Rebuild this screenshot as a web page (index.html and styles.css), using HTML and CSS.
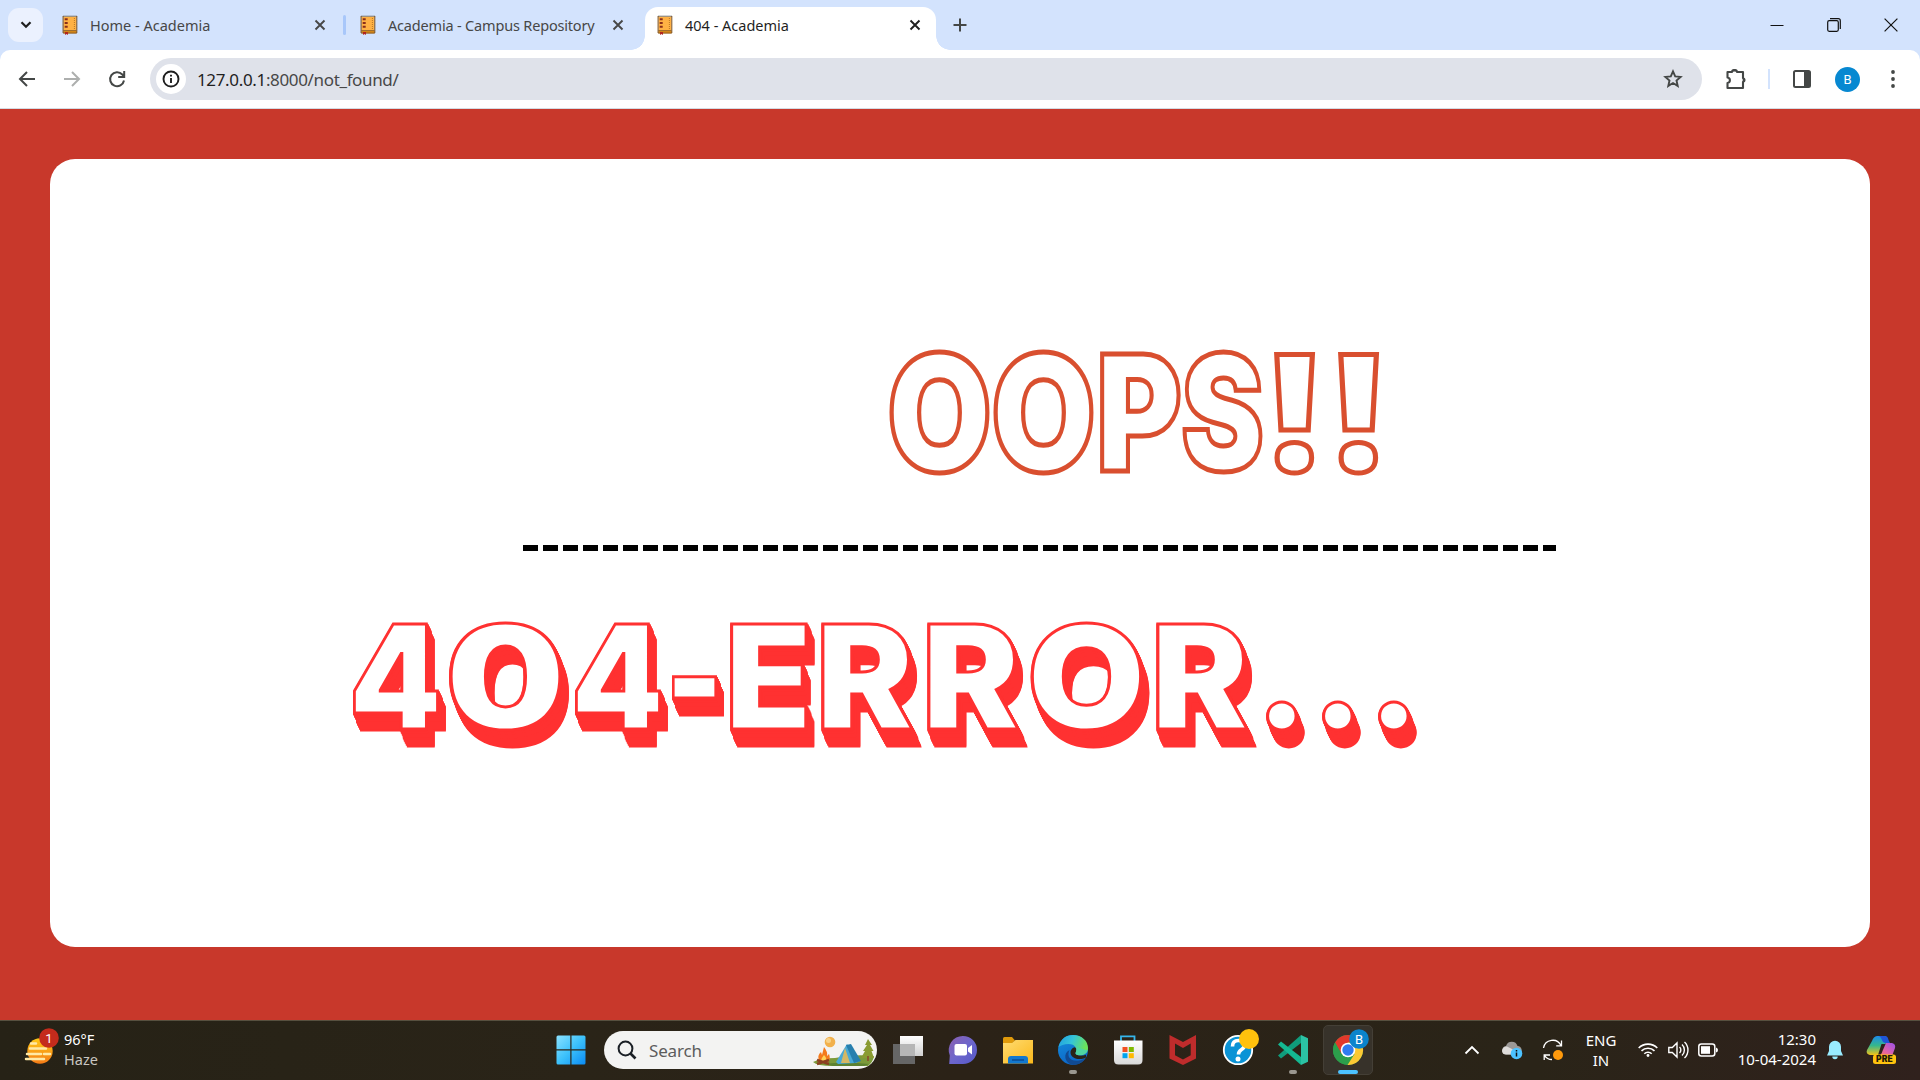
FILE: index.html
```html
<!DOCTYPE html>
<html lang="en">
<head>
<meta charset="utf-8">
<title>404 - Academia</title>
<link rel="stylesheet" href="styles.css">
</head>
<body>
<svg class="defs" width="0" height="0" aria-hidden="true">
  <defs>
    <symbol id="book" viewBox="0 0 16 20">
      <path d="M1.6 1.4h12.6v14.4H1.6z" fill="#ffb144"/>
      <path d="M1.500 16h13v2.300h-13z" fill="#f9a01b"/>
      <path d="M1 .7h14v1H1z" fill="#777"/>
      <path d="M1.1 1v17h13.700V1M1.400 15.800h13" fill="none" stroke="#7a4a16"/>
      <path d="M12.400 3v12" stroke="#a86a1d" stroke-width=".8" stroke-dasharray="1 1"/>
      <path d="M2.700 3.200h3v2h-3zM2.700 7h3v2h-3zM2.700 10.800h3v2h-3z" fill="#8a2e1a"/>
      <path d="M3 17h3v3l-1.500-1L3 20z" fill="#b3261e"/>
    </symbol>
    <symbol id="close" viewBox="0 0 12 12"><path d="M1.500 1.500l9 9M10.500 1.500l-9 9" fill="none" stroke="currentColor" stroke-width="1.900"/></symbol>
    <linearGradient id="gWin" x1="0" y1="0" x2="1" y2="1"><stop offset="0" stop-color="#8be2ff"/><stop offset=".5" stop-color="#3cc1fb"/><stop offset="1" stop-color="#0a8bf5"/></linearGradient>
    <linearGradient id="gSun" x1="0" y1="0" x2="0" y2="1"><stop offset="0" stop-color="#ffc917"/><stop offset="1" stop-color="#f47b16"/></linearGradient>
    <linearGradient id="gChat" x1="0" y1="0" x2="1" y2="1"><stop offset="0" stop-color="#8c5fae"/><stop offset=".5" stop-color="#6d66cc"/><stop offset="1" stop-color="#5558c9"/></linearGradient>
    <linearGradient id="gFold" x1="0" y1="0" x2="1" y2="1"><stop offset="0" stop-color="#ffdc72"/><stop offset="1" stop-color="#fbb81b"/></linearGradient>
    <linearGradient id="gEdge" x1="0" y1="0" x2="1" y2=".3"><stop offset="0" stop-color="#1f9ee0"/><stop offset=".5" stop-color="#35c4d8"/><stop offset="1" stop-color="#6be35a"/></linearGradient>
    <linearGradient id="gEdgeB" x1="0" y1="0" x2=".4" y2="1"><stop offset="0" stop-color="#1590dd"/><stop offset="1" stop-color="#0c66c7"/></linearGradient>
    <linearGradient id="gStore" x1="0" y1="0" x2="0" y2="1"><stop offset="0" stop-color="#fff"/><stop offset="1" stop-color="#d9d9d9"/></linearGradient>
    <linearGradient id="gView" x1="0" y1="0" x2="0" y2="1"><stop offset="0" stop-color="#fff"/><stop offset="1" stop-color="#d0d0d0"/></linearGradient>
    <linearGradient id="gCoA" x1="0" y1="0" x2="0" y2="1"><stop offset="0" stop-color="#1d8bea"/><stop offset=".5" stop-color="#35b78c"/><stop offset="1" stop-color="#f2c21a"/></linearGradient>
    <linearGradient id="gCoB" x1="1" y1="0" x2="0" y2="1"><stop offset="0" stop-color="#9b50e8"/><stop offset=".6" stop-color="#e264a8"/><stop offset="1" stop-color="#ff7a5a"/></linearGradient>
  </defs>
</svg>

<header class="tabstrip">
  <button class="tab-search"><svg width="12" height="8" viewBox="0 0 12 8"><path d="M1.500 1.200L6 5.800l4.500-4.600" fill="none" stroke="#1f1f1f" stroke-width="2.200"/></svg></button>
  <div class="tab tab-first"><svg class="fav"><use href="#book"/></svg><span class="t-home">Home - Academia</span><svg class="x"><use href="#close"/></svg></div>
  <i class="sep"></i>
  <div class="tab tab-second"><svg class="fav"><use href="#book"/></svg><span class="t-repo">Academia - Campus Repository</span><svg class="x"><use href="#close"/></svg></div>
  <div class="tab tab-active"><svg class="fav"><use href="#book"/></svg><span class="t-404">404 - Academia</span><svg class="x"><use href="#close"/></svg></div>
  <svg class="plus" width="14" height="14" viewBox="0 0 14 14"><path d="M7 .5v13M.5 7h13" stroke="#444746" stroke-width="2"/></svg>
  <div class="win">
    <svg width="14" height="14" viewBox="0 0 14 14"><path d="M.5 7.500h13" stroke="#111"/></svg>
    <svg width="14" height="14" viewBox="0 0 14 14" fill="none" stroke="#111" stroke-width="1.200"><rect x=".7" y="2.700" width="10.600" height="10.600" rx="1.500"/><path d="M3 .7h8.300a2 2 0 0 1 2 2V11"/></svg>
    <svg width="14" height="14" viewBox="0 0 14 14"><path d="M.6.600l12.800 12.800M13.400.6L.6 13.400" stroke="#111" stroke-width="1.200"/></svg>
  </div>
</header>

<nav class="toolbar-back"><div class="toolbar">
  <svg class="nav-i" width="18" height="18" viewBox="0 0 18 18" fill="none" stroke="#444746" stroke-width="2"><path d="M17 9H2.500M9 2L2 9l7 7"/></svg>
  <svg class="nav-i" width="18" height="18" viewBox="0 0 18 18" fill="none" stroke="#adafae" stroke-width="2"><path d="M1 9h14.500M9 2l7 7-7 7"/></svg>
  <svg class="nav-i" width="18" height="18" viewBox="0 0 18 18" fill="none" stroke="#444746" stroke-width="2"><path d="M16 10.500A7 7 0 1 1 14.300 4.500L16 6.300M16.200 1v6h-6"/></svg>
  <div class="omnibox">
    <span class="info"><svg width="18" height="18" viewBox="0 0 18 18"><circle cx="9" cy="9" r="7.500" fill="none" stroke="#1f1f1f" stroke-width="1.900"/><path d="M9 8v5M9 4.700v1.900" stroke="#1f1f1f" stroke-width="1.900"/></svg></span>
    <span class="url">127.0.0.1<span>:8000/not_found/</span></span>
    <svg class="star" width="20" height="20" viewBox="0 0 20 20"><path d="M10 2.400l2.200 5 5.400.5-4.100 3.600 1.200 5.400L10 14l-4.700 2.900 1.200-5.400-4.100-3.600 5.400-.5z" fill="none" stroke="#444746" stroke-width="1.900"/></svg>
  </div>
  <svg class="ext" width="22" height="22" viewBox="0 0 22 22"><path d="M3.500 4H7a2.500 2 0 0 1 5 0h6v6a2 2.500 0 0 1 0 4v6H2.500v-5c3.200-.5 3.200-5 0-5.500V4z" fill="none" stroke="#444746" stroke-width="2.100" stroke-linejoin="round"/><path d="M7 3.500a2.500 2.500 0 0 1 5 0zM18 9.500a2.500 2.500 0 0 1 0 5z" fill="#444746"/></svg>
  <i class="bar"></i>
  <svg class="side" width="18" height="18" viewBox="0 0 18 18"><rect x="1" y="1" width="16" height="16" rx="1.500" fill="none" stroke="#444746" stroke-width="2"/><path d="M11 1h6v16h-6z" fill="#444746"/></svg>
  <span class="avatar">B</span>
  <svg class="dots" width="4" height="18" viewBox="0 0 4 18" fill="#444746"><circle cx="2" cy="2" r="1.900"/><circle cx="2" cy="9" r="1.900"/><circle cx="2" cy="16" r="1.900"/></svg>
</div></nav>

<main class="page">
  <section class="card">
    <svg class="oops" width="520" height="150" viewBox="870 336 520 150" role="heading">
      <text y="470.500"><tspan x="887" textLength="105" lengthAdjust="spacingAndGlyphs">O</tspan><tspan x="991" textLength="105" lengthAdjust="spacingAndGlyphs">O</tspan><tspan x="1096" textLength="86" lengthAdjust="spacingAndGlyphs">P</tspan><tspan x="1181" textLength="83" lengthAdjust="spacingAndGlyphs">S</tspan><tspan class="bang" x="1270" textLength="49" lengthAdjust="spacingAndGlyphs">!</tspan><tspan class="bang" x="1334" textLength="49" lengthAdjust="spacingAndGlyphs">!</tspan></text>
    </svg>
    <div class="dashes"></div>
    <svg class="error" width="1100" height="150" viewBox="340 608 1100 150" role="heading">
      <text y="729"><tspan x="349" textLength="93" lengthAdjust="spacingAndGlyphs">4</tspan><tspan x="445" textLength="121" lengthAdjust="spacingAndGlyphs">0</tspan><tspan x="571" textLength="93" lengthAdjust="spacingAndGlyphs">4</tspan><tspan x="665" textLength="59" lengthAdjust="spacingAndGlyphs">-</tspan><tspan x="725" textLength="87" lengthAdjust="spacingAndGlyphs">E</tspan><tspan x="816" textLength="98" lengthAdjust="spacingAndGlyphs">R</tspan><tspan x="922" textLength="98" lengthAdjust="spacingAndGlyphs">R</tspan><tspan x="1027" textLength="119" lengthAdjust="spacingAndGlyphs">O</tspan><tspan x="1151" textLength="98" lengthAdjust="spacingAndGlyphs">R</tspan><tspan class="stops" x="1261 1317 1373">...</tspan></text>
    </svg>
  </section>
</main>

<footer class="taskbar">
  <div class="weather">
    <svg width="36" height="36" viewBox="0 0 36 36"><circle cx="16" cy="21" r="12.700" fill="url(#gSun)"/><path d="M7 13.500h5M6 18.500h16M3 24h14M20 24h6M2 29h18" stroke="#ffe9a6" stroke-width="2.500" stroke-linecap="round"/><circle cx="25" cy="8" r="9.800" fill="#c42b1c"/><text x="25" y="12.600" class="badge-n">1</text></svg>
    <p><span>96°F</span><small>Haze</small></p>
  </div>
  <svg class="start" width="30" height="30" viewBox="0 0 30 30" fill="url(#gWin)"><path d="M.5 2a1.500 1.500 0 0 1 1.500-1.500h12.300v13.700H.5zM15.500.5H28A1.500 1.500 0 0 1 29.500 2v12.200h-14zM.5 15.500h13.800v14H2A1.500 1.500 0 0 1 .5 28zM15.500 15.500h14V28a1.500 1.500 0 0 1-1.500 1.500H15.500z"/></svg>
  <div class="search">
    <svg width="20" height="20" viewBox="0 0 20 20"><circle cx="8.500" cy="8.500" r="6.900" fill="none" stroke="#1b2026" stroke-width="2"/><path d="M13.500 13.500l5 5" stroke="#1b2026" stroke-width="2.600"/></svg>
    <span>Search</span>
    <svg class="camp" width="62" height="34" viewBox="0 0 62 34">
      <path d="M0 28q8-4 22-4 18-4 39-2-1 6-6 10H20Q4 32 0 28z" fill="#7c9a3a"/><path d="M10 30q22-3 46 0l-5 2H20z" fill="#5c8130"/>
      <circle cx="17" cy="8" r="5.300" fill="#f2b14c"/><circle cx="15.500" cy="6.500" r="2.500" fill="#f8d289"/>
      <path d="M55 5l4 6h-2l3.500 6h-2l2.500 7H48l4-7h-2l4-6h-2z" fill="#8a9b32"/><path d="M54 22h2v5h-2z" fill="#8a5a2c"/>
      <path d="M23 28l11-18 13 17-4 2-18 1z" fill="#4aa9d6"/><path d="M33 11l5-1 10 17-7 2z" fill="#277fae"/><path d="M28 29l4-15 5 15z" fill="#d5b865"/>
      <path d="M6 27q-2-6 2-9l1 3 2-8q4 5 3 9l2-2q2 5-1 8z" fill="#f47a1c"/><path d="M8 27q1-4 3-6 3 3 2 6z" fill="#ffd257"/><path d="M4 26l12 4M16 26L4 30" stroke="#8b3f20" stroke-width="2.500"/>
    </svg>
  </div>
  <div class="apps">
    <span><svg viewBox="0 0 32 32"><path d="M1 10h22v20H1z" fill="#666"/><path d="M8 2h23v20H8z" fill="url(#gView)"/><path d="M8 10h15v12H8z" fill="#b6b6b6"/></svg></span>
    <span><svg viewBox="0 0 32 32"><path d="M16 2a14 14 0 1 1 0 28H2.200l.6-8.500A14 14 0 0 1 16 2z" fill="url(#gChat)"/><rect x="7.500" y="10" width="12.500" height="11.500" rx="2" fill="#fff"/><path d="M21 14l4-3v9.500l-4-3z" fill="#fff"/></svg></span>
    <span><svg viewBox="0 0 32 32"><path d="M1 4.500Q1 3 2.500 3H10l3 3.500-3 3H1z" fill="#e09a0b"/><path d="M1 9h9l3.500-3H31v23.500H1z" fill="url(#gFold)"/><path d="M6 29.500V25q0-3 3-3h14q3 0 3 3v4.500z" fill="#1278cf"/><path d="M10 26h12" stroke="#0b4b93" stroke-width="1.500"/></svg></span>
    <span><svg viewBox="0 0 32 32"><circle cx="16" cy="16" r="15" fill="url(#gEdgeB)"/><path d="M1.500 13C4 4.500 9 1 16 1c9 0 15 6 15 13 0 4-3 7-8 7-4 0-5-1.500-4.200-3 1.600-3-.3-8-7.300-8-4.500 0-8 1.500-10 3z" fill="url(#gEdge)"/><path d="M12.500 16c-4 9 4 14 16 8.500C25 29 20.500 31 16 31 7 29 6 19 12.500 16z" fill="#114a92"/><path d="M17.500 13.200c3 1.500 2 4 1 5.500-1 2 4 4 10.500 2v2.800c-6 3-14.500 1.500-15.500-4.500-.3-2.800 1.500-5 4-5.800z" fill="#2a2318"/><path d="M30.700 16.500c-.8 2.700-4 4.800-7.700 4.800-4 0-5-1.500-4.200-3l1-5z" fill="#4fd5a2"/></svg><b></b></span>
    <span><svg viewBox="0 0 32 32"><path d="M9 8V2.300h13.500V8" fill="none" stroke="#35b6ec" stroke-width="1.800"/><path d="M2 6.500h28.500V26q0 4.500-4.500 4.500H6.500Q2 30.500 2 26z" fill="url(#gStore)"/><path d="M10.500 13h5v5h-5z" fill="#f25022"/><path d="M16.800 13h5v5h-5z" fill="#7fba00"/><path d="M10.500 19.200h5v5h-5z" fill="#00a4ef"/><path d="M16.800 19.200h5v5h-5z" fill="#ffb900"/></svg></span>
    <span><svg viewBox="0 0 32 32"><path d="M2.500 1L16 8l13-7v23.500L16 31 2.500 24.500zM8 9.500v11.700l8 4.300 7.700-4.300V9.500L16 14z" fill="#bf2c2c" fill-rule="evenodd"/></svg></span>
    <span><svg viewBox="0 0 32 32" class="over"><circle cx="16" cy="16" r="14.200" fill="#0a93d6" stroke="#fff" stroke-width="1.800"/><path d="M10.500 12.500q0-6 6-6 5.800 0 5.800 4.800 0 2.800-3 4.500-2.800 1.700-2.800 4.700" fill="none" stroke="#fff" stroke-width="3.600"/><circle cx="16" cy="25" r="2.500" fill="#fff"/><circle cx="27" cy="5" r="10" fill="#ffc10d"/></svg></span>
    <span><svg viewBox="0 0 32 32"><path d="M1 21.500l3 3L24 9V1z" fill="#109c7c"/><path d="M1 10.500l3-3L24 23v8z" fill="#14b892"/><path d="M24 1l7 3.200v23.600L24 31z" fill="#2bc2a4"/></svg><b></b></span>
    <span class="active"><svg viewBox="0 0 32 32" class="over"><circle cx="16" cy="16" r="15" fill="#2c9e4b"/><path d="M16 16L3 8.500A15 15 0 0 1 29 8.500H16z" fill="#e2382b"/><path d="M3 8.500L9.500 20 16 16V8.500z" fill="#e2382b"/><path d="M3 8.500A15 15 0 0 0 15.500 31L22 20H9.500z" fill="#2c9e4b"/><path d="M16 16l6.500 4L15.500 31A15 15 0 0 0 29 8.500H16z" fill="#fcc934"/><circle cx="16" cy="16" r="7.300" fill="#fff"/><circle cx="16" cy="16" r="5.700" fill="#2f7bf0"/><circle cx="27" cy="5" r="9.800" fill="#0a84cc"/><text x="27" y="9.500" class="badge-b">B</text></svg><b></b></span>
  </div>
  <div class="tray">
    <svg class="chev" width="16" height="10" viewBox="0 0 16 10"><path d="M1.500 8.500L8 2l6.500 6.500" fill="none" stroke="#fff" stroke-width="1.800"/></svg>
    <svg class="cloud" width="22" height="20" viewBox="0 0 22 20"><path d="M5 14.500a4.300 4.300 0 0 1 0-8.500 6 6 0 0 1 11.500 0 4 4 0 0 1 0 8.500z" fill="#9b9896"/><path d="M1 11a4.500 4.500 0 0 1 5-4.500l8 4-2 4H5a4 4 0 0 1-4-3.500z" fill="#dedcda"/><circle cx="15.500" cy="13.500" r="5.800" fill="#4cc2ff"/><path d="M15.500 12.500v4M15.500 10v1.500" stroke="#111" stroke-width="1.500"/></svg>
    <svg class="sync" width="22" height="22" viewBox="0 0 22 22" fill="none" stroke="#fff" stroke-width="1.300"><path d="M1.500 9A9.300 9.300 0 0 1 19 6.500M19.500 1.500v5.300h-5.300M8 16H2.200v5M2.500 16.300A9 9 0 0 0 10 20.500"/><circle cx="16" cy="16" r="5" fill="#ff9a0c" stroke="none"/></svg>
    <p class="lang">ENG<br>IN</p>
    <svg class="wifi" width="20" height="16" viewBox="0 0 20 16" fill="none" stroke="#fff" stroke-width="1.600"><path d="M.7 6a13.200 13.200 0 0 1 18.600 0M3.500 8.900a9.200 9.200 0 0 1 13 0M6.300 11.700a5.300 5.300 0 0 1 7.400 0"/><circle cx="10" cy="13.500" r="1.400" fill="#fff" stroke="none"/></svg>
    <svg class="vol" width="20" height="18" viewBox="0 0 20 18" fill="none" stroke="#fff" stroke-width="1.400"><path d="M.8 6.500h3.500L9 2v14l-4.700-4.500H.8zM11.500 6a4 4 0 0 1 0 6M14 3.500a7.500 7.500 0 0 1 0 11M16.500 1a11 11 0 0 1 0 16"/></svg>
    <svg class="bat" width="20" height="14" viewBox="0 0 20 14"><rect x=".8" y="1" width="16" height="12" rx="2.500" fill="none" stroke="#fff" stroke-width="1.500"/><path d="M3 3.200h9v7.600H3z" fill="#fff"/><path d="M18 4.500q2 .5 2 2.500t-2 2.500z" fill="#fff"/></svg>
    <p class="clock">12:30<br>10-04-2024</p>
    <svg class="bell" width="16" height="20" viewBox="0 0 16 20" fill="#99ebff"><path d="M8 .8a6 6 0 0 1 6 6V11l2 4.500H0L2 11V6.800a6 6 0 0 1 6-6zM5.300 16.500h5.400a2.700 2.700 0 0 1-5.400 0z"/></svg>
    <svg class="copilot" width="30" height="30" viewBox="0 0 30 30"><path d="M6 6Q7.500 1.500 11 1h8q3 .5 2.500 4l-2 4h-4l-3.500 11H4Q-.5 19 1 15z" fill="url(#gCoA)"/><path d="M13 1h6q3 .5 3.500 4l1.500 3h-4.500q-2.500 0-3.500-3T13 1z" fill="#1f55d8"/><path d="M20 8h6q4 1 3 5l-3 8H12.500q3-1 4-5z" fill="url(#gCoB)"/><rect x="7" y="19.500" width="23" height="9.500" rx="2.500" fill="#ffc20e"/><text x="18.500" y="27" class="pre">PRE</text></svg>
  </div>
</footer>
</body>
</html>
```
FILE: styles.css
```css
* { box-sizing: border-box; }
body { margin: 0; width: 1920px; height: 1080px; overflow: hidden; display: flex; flex-direction: column; font-family: "Noto Sans", "Open Sans", sans-serif; background: #fff; }
p { margin: 0; }
svg { display: block; flex: none; overflow: visible; }
.defs { position: absolute; }

/* tab strip */
.tabstrip { height: 50px; background: #d3e3fd; display: flex; align-items: center; color: #474747; font-size: 14.5px; }
.tab-search { margin: 0 0 0 8px; width: 35px; height: 34px; border: 0; padding: 0; border-radius: 11px; background: #ebf1fe; display: flex; align-items: center; justify-content: center; }
.tab { display: flex; align-items: center; height: 43px; white-space: nowrap; }
.tab span { flex: 1; margin-left: 12px; }
.tab .t-repo { letter-spacing: -.18px; }
.fav { width: 16px; height: 20px; }
.x { width: 12px; height: 12px; }
.tab-first { width: 264px; margin-left: 19px; }
.sep { width: 3px; height: 20px; border-radius: 2px; background: #a8c7fa; margin-left: 17px; }
.tab-second { width: 264px; margin-left: 14px; }
.tab-active { position: relative; width: 291px; margin: 7px 0 0 21px; padding: 0 15px 8px 12px; background: #fff; border-radius: 13px 13px 0 0; color: #1f1f1f; }
.tab-active::before, .tab-active::after { content: ""; position: absolute; bottom: 0; width: 14px; height: 14px; }
.tab-active::before { left: -14px; background: radial-gradient(circle at 0 0, transparent 13.500px, #fff 14px); }
.tab-active::after { right: -14px; background: radial-gradient(circle at 100% 0, transparent 13.500px, #fff 14px); }
.plus { margin-left: 17px; }
.win { margin: 0 22px 0 auto; display: flex; gap: 43px; }

/* toolbar */
.toolbar-back { background: #d3e3fd; }
.toolbar { height: 59px; background: #fff; border-radius: 10px 10px 0 0; border-bottom: 1px solid #d5dbe3; display: flex; align-items: center; padding-left: 18px; }
.nav-i { margin-right: 27px; }
.omnibox { width: 1552px; height: 42px; margin-left: -3px; border-radius: 21px; background: #dfe2ea; display: flex; align-items: center; padding: 0 19px 0 6px; }
.info { width: 30px; height: 30px; border-radius: 50%; background: #fff; display: flex; align-items: center; justify-content: center; }
.url { flex: 1; margin-left: 11px; font-size: 17px; letter-spacing: -.35px; color: #1f1f1f; }
.url span { color: #474747; }
.ext { margin-left: 23px; }
.bar { width: 2px; height: 20px; background: #d3e3fd; margin-left: 21px; }
.side { margin-left: 23px; }
.avatar { width: 25px; height: 25px; margin-left: 24px; border-radius: 50%; background: #0788d1; color: #fff; font: 13px/25px Roboto, sans-serif; text-align: center; }
.dots { margin-left: 31px; }

/* page */
.page { height: 911px; background: #c8382b; padding: 50px; }
.card { height: 788px; background: #fff; border-radius: 25px; padding: 177px 0 0 290px; }
.oops { margin-left: 530px; }
.oops text { font: 900 161px Inter, sans-serif; fill: #fff; stroke: #d94f2f; stroke-width: 5px; }
.oops .bang { font: 800 163px "Open Sans", sans-serif; }
.dashes { width: 1033px; height: 6px; margin: 59px 0 57px 183px; background: repeating-linear-gradient(90deg, #000 0 15px, transparent 15px 20px); }
/* the chained shadows build the solid slanted side of the letters */
.error text { font: 900 144px Inter, sans-serif; fill: #fff; stroke: #ff3131; stroke-width: 3px; }
.error .stops { font: 900 175px Lato, sans-serif; }
.error { filter: drop-shadow(.5px 1px #ff3131) drop-shadow(1px 2px #ff3131) drop-shadow(2px 4px #ff3131) drop-shadow(3.500px 8px #ff3131) drop-shadow(1px 2px #ff3131); }

/* taskbar */
.taskbar { height: 60px; border-top: 1px solid #57503f; padding-bottom: 1px; background: linear-gradient(90deg, #262216, #2a2418 30%, #2b2217 50%, #2a2418 80%, #30211d); display: flex; align-items: center; color: #fff; font-size: 15px; }
.weather { width: 532px; padding-left: 24px; display: flex; line-height: 20px; }
.weather svg { margin-top: -1px; }
.weather p { margin: -2px 0 0 4px; font-size: 14.5px; }
.weather span, .weather small { display: block; font-size: inherit; }
.weather small { color: #c9c6c1; }
.badge-n, .badge-b { font: 13px Roboto, sans-serif; fill: #fff; text-anchor: middle; }
.start { margin-left: 24px; }
.search { width: 273px; height: 38px; margin-left: 18px; border-radius: 19px; background: #f3f3f2; display: flex; align-items: center; padding: 0 2px 0 13px; color: #5c5c5c; font-size: 17px; }
.search span { flex: 1; margin-left: 12px; letter-spacing: -.15px; }
.camp { margin-top: 2px; }
.apps { display: flex; margin-left: 6px; }
.apps span { width: 50px; height: 50px; margin-right: 5px; display: flex; align-items: center; justify-content: center; position: relative; border-radius: 5px; }
.apps svg { width: 32px; height: 32px; }
.apps b { position: absolute; bottom: 1px; width: 8px; height: 4px; border-radius: 2px; background: #9b9890; }
.apps .active { background: #37322a; border: 1px solid #443f36; }
.apps .active b { width: 20px; bottom: 0; background: #4cc2ff; }
.tray { margin-left: auto; display: flex; align-items: center; padding-right: 24px; line-height: 20px; }
.cloud { margin-left: 21px; }
.sync { margin-left: 19px; }
.lang { margin-left: 21px; text-align: center; width: 32px; }
.wifi { margin-left: 21px; }
.vol { margin-left: 10px; }
.bat { margin-left: 10px; }
.clock { width: 98px; margin-top: -2px; text-align: right; }
.bell { margin-left: 11px; }
.copilot { margin-left: 23px; }
.pre { font: 900 8.500px Inter, sans-serif; fill: #201a08; text-anchor: middle; letter-spacing: .2px; }
```
